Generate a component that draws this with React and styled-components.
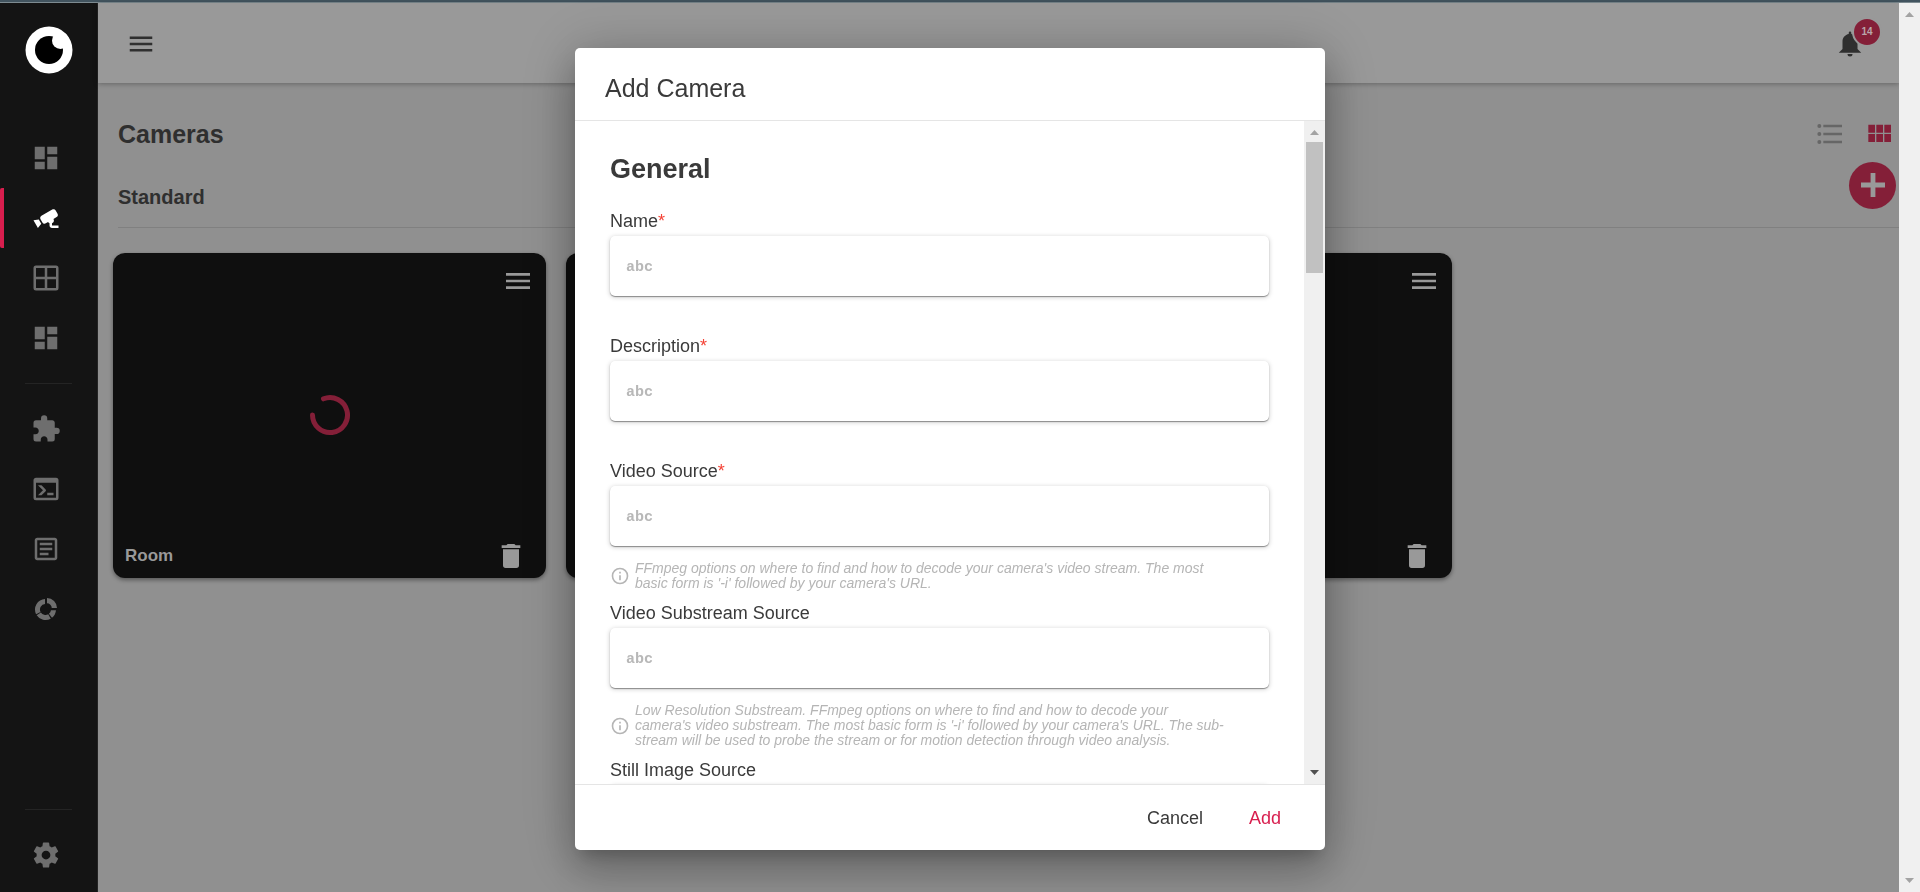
import React from 'react';
import styled, { createGlobalStyle } from 'styled-components';

const Global = createGlobalStyle`
  *, *::before, *::after { box-sizing: border-box; }
  html, body, #root { margin: 0; height: 100%; }
  body { font-family: "Liberation Sans", Arial, sans-serif; color: #2f2f2f; background: #909090; overflow: hidden; }
  h1, h2, h3, p { margin: 0; }
  button { font-family: inherit; border: 0; padding: 0; background: none; color: inherit; cursor: pointer; }
`;

const paths = {
  dashboard: 'M13,3V9H21V3M13,21H21V11H13M3,21H11V15H3M3,13H11V3H3V13Z',
  cctv: 'M18.15,4.94C17.77,4.91 17.37,5 17,5.2L8.35,10.2C7.39,10.76 7.07,12 7.62,12.94L9.12,15.53C9.67,16.5 10.89,16.82 11.85,16.27L13.65,15.23C13.92,15.69 14.32,16.06 14.81,16.27V18.04C14.81,19.13 15.7,20 16.81,20H22V18.04H16.81V16.27C17.72,15.87 18.31,14.97 18.31,14C18.31,13.54 18.19,13.11 17.97,12.73L20.5,11.27C21.47,10.71 21.8,9.5 21.24,8.53L19.74,5.94C19.4,5.34 18.79,5 18.15,4.94M6.22,13.17L2,13.87L2.75,15.17L4.75,18.63L5.5,19.93L8.22,16.63L6.22,13.17Z',
  grid: 'M4,2H20A2,2 0 0,1 22,4V20A2,2 0 0,1 20,22H4A2,2 0 0,1 2,20V4A2,2 0 0,1 4,2M4,4V11H11V4H4M4,20H11V13H4V20M20,20V13H13V20H20M20,4H13V11H20V4Z',
  puzzle: 'M20.5,11H19V7C19,5.89 18.1,5 17,5H13V3.5A2.5,2.5 0 0,0 10.5,1A2.5,2.5 0 0,0 8,3.5V5H4A2,2 0 0,0 2,7V10.8H3.5C5,10.8 6.2,12 6.2,13.5C6.2,15 5,16.2 3.5,16.2H2V20A2,2 0 0,0 4,22H7.8V20.5C7.8,19 9,17.8 10.5,17.8C12,17.8 13.2,19 13.2,20.5V22H17A2,2 0 0,0 19,20V16H20.5A2.5,2.5 0 0,0 23,13.5A2.5,2.5 0 0,0 20.5,11Z',
  console: 'M20,19V7H4V19H20M20,3A2,2 0 0,1 22,5V19A2,2 0 0,1 20,21H4A2,2 0 0,1 2,19V5C2,3.89 2.9,3 4,3H20M13,17V15H18V17H13M9.58,13L5.57,9H8.4L11.7,12.3C12.09,12.69 12.09,13.33 11.7,13.72L8.42,17H5.59L9.58,13Z',
  log: 'M5,3C3.89,3 3,3.89 3,5V19C3,20.11 3.89,21 5,21H19C20.11,21 21,20.11 21,19V5C21,3.89 20.11,3 19,3H5M5,5H19V19H5V5M7,7V9H17V7H7M7,11V13H17V11H7M7,15V17H14V15H7Z',
  donut: 'M12.8,3.2A8,8 0 0,1 20.8,11.2H16.6A3.8,3.8 0 0,0 12.8,7.4ZM11.2,4A8.4,8.4 0 0,0 4.04,16.1L7.64,14.34A4.4,4.4 0 0,1 11.2,8.02ZM4.54,16.94A8.4,8.4 0 0,0 15.8,19.7L13.8,16.23A4.4,4.4 0 0,1 7.9,14.78ZM16.8,18.95A8.4,8.4 0 0,0 19.98,13H15.96A4.4,4.4 0 0,1 14.33,15.83Z',
  cog: 'M12,15.5A3.5,3.5 0 0,1 8.5,12A3.5,3.5 0 0,1 12,8.5A3.5,3.5 0 0,1 15.5,12A3.5,3.5 0 0,1 12,15.5M19.43,12.97C19.47,12.65 19.5,12.33 19.5,12C19.5,11.67 19.47,11.34 19.43,11L21.54,9.37C21.73,9.22 21.78,8.95 21.66,8.73L19.66,5.27C19.54,5.05 19.27,4.96 19.05,5.05L16.56,6.05C16.04,5.66 15.5,5.32 14.87,5.07L14.5,2.42C14.46,2.18 14.25,2 14,2H10C9.75,2 9.54,2.18 9.5,2.42L9.13,5.07C8.5,5.32 7.96,5.66 7.44,6.05L4.95,5.05C4.73,4.96 4.46,5.05 4.34,5.27L2.34,8.73C2.21,8.95 2.27,9.22 2.46,9.37L4.57,11C4.53,11.34 4.5,11.67 4.5,12C4.5,12.33 4.53,12.65 4.57,12.97L2.46,14.63C2.27,14.78 2.21,15.05 2.34,15.27L4.34,18.73C4.46,18.95 4.73,19.03 4.95,18.95L7.44,17.94C7.96,18.34 8.5,18.68 9.13,18.93L9.5,21.58C9.54,21.82 9.75,22 10,22H14C14.25,22 14.46,21.82 14.5,21.58L14.87,18.93C15.5,18.67 16.04,18.34 16.56,17.94L19.05,18.95C19.27,19.03 19.54,18.95 19.66,18.73L21.66,15.27C21.78,15.05 21.73,14.78 21.54,14.63L19.43,12.97Z',
  menu: 'M3,6H21V8H3V6M3,11H21V13H3V11M3,16H21V18H3V16Z',
  bell: 'M14,20A2,2 0 0,1 12,22A2,2 0 0,1 10,20H14M12,2A1,1 0 0,1 13,3V4.08C15.84,4.56 18,7.03 18,10V16L21,19H3L6,16V10C6,7.03 8.16,4.56 11,4.08V3A1,1 0 0,1 12,2Z',
  list: 'M7,5H21V7H7V5M7,13V11H21V13H7M4,4.5A1.5,1.5 0 0,1 5.5,6A1.5,1.5 0 0,1 4,7.5A1.5,1.5 0 0,1 2.5,6A1.5,1.5 0 0,1 4,4.5M4,10.5A1.5,1.5 0 0,1 5.5,12A1.5,1.5 0 0,1 4,13.5A1.5,1.5 0 0,1 2.5,12A1.5,1.5 0 0,1 4,10.5M7,19V17H21V19H7M4,16.5A1.5,1.5 0 0,1 5.5,18A1.5,1.5 0 0,1 4,19.5A1.5,1.5 0 0,1 2.5,18A1.5,1.5 0 0,1 4,16.5Z',
  module: 'M16,5V11H21V5M10,11H15V5H10M16,18H21V12H16M10,18H15V12H10M4,18H9V12H4M4,11H9V5H4V11Z',
  plus: 'M20,13.6H13.6V20H10.4V13.6H4V10.4H10.4V4H13.6V10.4H20V13.6Z',
  trash: 'M19,4H15.5L14.5,3H9.5L8.5,4H5V6H19M6,19A2,2 0 0,0 8,21H16A2,2 0 0,0 18,19V7H6V19Z',
  info: 'M11,9H13V7H11M12,20C7.59,20 4,16.41 4,12C4,7.59 7.59,4 12,4C16.41,4 20,7.59 20,12C20,16.41 16.41,20 12,20M12,2A10,10 0 0,0 2,12A10,10 0 0,0 12,22A10,10 0 0,0 22,12A10,10 0 0,0 12,2M11,17H13V11H11V17Z',
};

const Svg = styled.svg`
  display: block;
  flex: none;
  fill: currentColor;
`;
const Icon = ({ name, size = 30 }) => (
  <Svg width={size} height={size} viewBox="0 0 24 24" aria-hidden="true"><path d={paths[name]} /></Svg>
);

const Screen = styled.div`
  display: flex;
  flex-direction: column;
  height: 100vh;
`;
const TopStrip = styled.div`
  flex: none;
  height: 3px;
  background: #42545f;
  border-bottom: 1px solid #7d8b91;
`;
const Body = styled.div`
  flex: 1;
  display: flex;
  min-height: 0;
`;
const Sidebar = styled.nav`
  flex: none;
  display: flex;
  flex-direction: column;
  width: 98px;
  background: #141414;
  border-right: 1px solid #242424;
  padding: 22px 0 7px;
`;
const Logo = styled.svg`
  display: block;
  flex: none;
  width: 50px;
  height: 50px;
  margin: 0 0 53px 24px;
`;
const NavItem = styled.a`
  flex: none;
  display: flex;
  align-items: center;
  height: 60px;
  padding-left: ${(p) => (p.$active ? 27 : 31)}px;
  color: ${(p) => (p.$active ? '#fff' : '#6e6e6e')};
  border-left: ${(p) => (p.$active ? '4px solid #d81e4e' : '0')};
  border-radius: 2px;
`;
const Rule = styled.hr`
  flex: none;
  width: 47px;
  height: 1px;
  border: 0;
  margin: ${(p) => (p.$bottom ? 'auto 0 15px 25px' : '15px 0 15px 25px')};
  background: #242424;
`;
const Main = styled.div`
  flex: 1;
  min-width: 0;
`;
const Header = styled.header`
  display: flex;
  align-items: center;
  justify-content: space-between;
  height: 80px;
  padding: 2px 34px 0 28px;
  background: #999;
  box-shadow: 0 1px 5px rgba(0, 0, 0, .3);
`;
const IconButton = styled.button`
  display: flex;
  position: relative;
  color: ${(p) => p.$color || 'inherit'};
`;
const Badge = styled.span`
  position: absolute;
  left: 17px;
  top: -12px;
  width: 30px;
  height: 30px;
  line-height: 26px;
  border: 2px solid #999;
  border-radius: 50%;
  background: #841f38;
  color: #b9a5aa;
  font-size: 10px;
  font-weight: bold;
  text-align: center;
`;
const Content = styled.main`
  padding: 31px 0 0 15px;
`;
const TitleRow = styled.div`
  display: flex;
  justify-content: space-between;
  align-items: center;
  height: 40px;
  padding: 0 4px 0 5px;
`;
const PageTitle = styled.h1`
  font-size: 25px;
  line-height: 32px;
`;
const Views = styled.div`
  display: flex;
  gap: 17px;
`;
const SectionRow = styled.div`
  display: flex;
  justify-content: space-between;
  align-items: center;
  height: 74px;
  margin: 0 0 25px 5px;
  padding: 0 3px 11px 0;
  border-bottom: 1px solid #808080;
`;
const SectionTitle = styled.h2`
  font-size: 20px;
  line-height: 24px;
  padding-top: 24px;
`;
const AddButton = styled.button`
  display: grid;
  place-items: center;
  width: 47px;
  height: 47px;
  border-radius: 50%;
  background: #841f38;
  color: #999;
`;
const Cards = styled.div`
  display: grid;
  grid-template-columns: repeat(4, 1fr);
  gap: 20px;
  margin-right: -6px;
`;
const Card = styled.article`
  display: flex;
  flex-direction: column;
  justify-content: space-between;
  height: 325px;
  padding: 12px;
  padding-bottom: 6px;
  border-radius: 12px;
  background: #0f0f0f;
  color: #999;
  box-shadow: 0 2px 4px rgba(0, 0, 0, .4);
`;
const CardTop = styled.div`
  display: flex;
  justify-content: flex-end;
`;
const CardBottom = styled.div`
  display: flex;
  align-items: center;
  justify-content: space-between;
  padding-right: 7px;
`;
const CardName = styled.h3`
  font-size: 17px;
  line-height: 24px;
`;
const Spinner = styled.svg`
  align-self: center;
  width: 42px;
  height: 42px;
  margin-bottom: 8px;
  fill: none;
  stroke: #841f38;
  stroke-width: 5;
  stroke-linecap: round;
`;

const ScrollTrack = styled.div`
  flex: none;
  display: flex;
  flex-direction: column;
  align-items: center;
  justify-content: space-between;
  width: 21px;
  background: #f0f0f0;
`;
const Arrow = styled.span`
  flex: none;
  width: 9px;
  height: 5px;
  margin: ${(p) => (p.$down ? '0 0 9px' : '9px 0 7px')};
  background: ${(p) => (p.$dark ? '#505050' : '#a3a3a3')};
  clip-path: ${(p) => (p.$down ? 'polygon(0 0, 100% 0, 50% 100%)' : 'polygon(50% 0, 100% 100%, 0 100%)')};
`;
const Thumb = styled.span`
  width: 17px;
  height: 131px;
  margin-bottom: auto;
  background: #c1c1c1;
`;

const Overlay = styled.div`
  position: fixed;
  inset: 0 21px 0 0;
  display: grid;
  place-items: center;
  padding: 48px 0 42px;
`;
const Dialog = styled.section`
  display: flex;
  flex-direction: column;
  width: 750px;
  max-width: 100%;
  height: 100%;
  margin-left: 1px;
  border-radius: 5px;
  overflow: hidden;
  background: #fff;
  color: #3a3a3a;
  box-shadow: 0 11px 15px -7px rgba(0, 0, 0, .2), 0 24px 38px 3px rgba(0, 0, 0, .14), 0 9px 46px 8px rgba(0, 0, 0, .12), 0 0 60px rgba(0, 0, 0, .12);
`;
const DialogHeader = styled.header`
  flex: none;
  display: flex;
  align-items: center;
  height: 73px;
  padding: 8px 30px 0;
  border-bottom: 1px solid #e5e5e5;
`;
const DialogTitle = styled.h2`
  font-size: 25px;
  font-weight: normal;
`;
const DialogBody = styled.div`
  flex: 1;
  display: flex;
  min-height: 0;
`;
const Form = styled.form`
  flex: 1;
  min-width: 0;
  overflow: hidden;
  padding: 30px 35px 0;
`;
const GroupTitle = styled.h3`
  font-size: 27px;
  line-height: 36px;
  margin-bottom: 22px;
`;
const Label = styled.label`
  display: block;
  font-size: 18px;
  line-height: 24px;
  margin-bottom: 3px;
`;
const Star = styled.span`
  color: #f44336;
`;
const InputBox = styled.div`
  display: flex;
  align-items: center;
  height: 60px;
  padding: 2px 16px 0;
  gap: 8px;
  border-radius: 5px;
  background: #fff;
  box-shadow: 0 1px 1px rgba(0, 0, 0, .38), 0 1px 5px rgba(0, 0, 0, .22);
`;
const TypeMark = styled.span`
  font: bold 15px "Liberation Mono", monospace;
  color: #b8b8b8;
`;
const Input = styled.input`
  flex: 1;
  min-width: 0;
  height: 40px;
  border: 0;
  outline: 0;
  background: none;
  font: 18px "Liberation Sans", sans-serif;
`;
const Hint = styled.div`
  display: flex;
  align-items: center;
  gap: 5px;
  width: 616px;
  max-width: 100%;
  padding: 15px 0 10px;
  color: #b5b5b5;
`;
const HintText = styled.p`
  font-size: 14px;
  line-height: 15px;
  font-style: italic;
`;
const Spacer = styled.div`
  height: 38px;
`;
const DialogFooter = styled.footer`
  flex: none;
  display: flex;
  align-items: center;
  justify-content: flex-end;
  gap: 46px;
  height: 66px;
  padding: 0 44px;
  border-top: 1px solid #e5e5e5;
`;
const TextButton = styled.button`
  font-size: 18px;
  line-height: 24px;
  color: ${(p) => (p.$primary ? '#d81e4e' : '#3a3a3a')};
`;

const nav = ['dashboard', 'cctv', 'grid', 'dashboard'];
const tools = ['puzzle', 'console', 'log', 'donut'];
const cameras = [{ id: 1, name: 'Room' }, { id: 2 }, { id: 3 }];
const fields = [
  { id: 'name', label: 'Name', required: true },
  { id: 'description', label: 'Description', required: true },
  { id: 'source', label: 'Video Source', required: true, hint: ["FFmpeg options on where to find and how to decode your camera's video stream. The most", "basic form is '-i' followed by your camera's URL."] },
  { id: 'substream', label: 'Video Substream Source', hint: ['Low Resolution Substream. FFmpeg options on where to find and how to decode your', "camera's video substream. The most basic form is '-i' followed by your camera's URL. The sub-", 'stream will be used to probe the stream or for motion detection through video analysis.'] },
  { id: 'still', label: 'Still Image Source' },
];

function Scrollbar({ thumb, dark }) {
  return (
    <ScrollTrack aria-hidden="true">
      <Arrow />
      {thumb && <Thumb />}
      <Arrow $down $dark={dark} />
    </ScrollTrack>
  );
}

function Field({ id, label, required, hint }) {
  return (
    <div>
      <Label htmlFor={id}>{label}{required && <Star>*</Star>}</Label>
      <InputBox>
        <TypeMark aria-hidden="true">abc</TypeMark>
        <Input id={id} type="text" />
      </InputBox>
      {hint ? (
        <Hint>
          <Icon name="info" size={20} />
          <HintText>{hint.map((line, i) => <React.Fragment key={line}>{i > 0 && <br />}{line}</React.Fragment>)}</HintText>
        </Hint>
      ) : <Spacer />}
    </div>
  );
}

export default function App() {
  return (
    <Screen>
      <Global />
      <TopStrip />
      <Body>
        <Sidebar aria-label="Main">
          <Logo viewBox="0 0 50 50" aria-hidden="true">
            <circle cx="25" cy="25" r="23.5" fill="#fff" />
            <circle cx="25" cy="25" r="14" fill="#000" />
            <circle cx="36.5" cy="15.5" r="8.5" fill="#fff" />
          </Logo>
          {nav.map((n, i) => <NavItem key={i} href="#" $active={n === 'cctv'} aria-label={n}><Icon name={n} /></NavItem>)}
          <Rule />
          {tools.map((n) => <NavItem key={n} href="#" aria-label={n}><Icon name={n} /></NavItem>)}
          <Rule $bottom />
          <NavItem href="#" aria-label="Settings"><Icon name="cog" /></NavItem>
        </Sidebar>
        <Main>
          <Header>
            <IconButton aria-label="Menu"><Icon name="menu" /></IconButton>
            <IconButton aria-label="Notifications"><Icon name="bell" /><Badge>14</Badge></IconButton>
          </Header>
          <Content>
            <TitleRow>
              <PageTitle>Cameras</PageTitle>
              <Views>
                <IconButton $color="#666" aria-label="List view"><Icon name="list" size={32} /></IconButton>
                <IconButton $color="#841f38" aria-label="Grid view"><Icon name="module" size={32} /></IconButton>
              </Views>
            </TitleRow>
            <SectionRow>
              <SectionTitle>Standard</SectionTitle>
              <AddButton aria-label="Add camera"><Icon name="plus" size={36} /></AddButton>
            </SectionRow>
            <Cards>
              {cameras.map((c) => (
                <Card key={c.id}>
                  <CardTop><IconButton aria-label="Camera menu"><Icon name="menu" size={32} /></IconButton></CardTop>
                  <Spinner viewBox="0 0 42 42" aria-hidden="true"><path d="M14.5 4.8A17.5 17.5 0 1 1 3.5 21" /></Spinner>
                  <CardBottom>
                    <CardName>{c.name}</CardName>
                    <IconButton aria-label="Delete camera"><Icon name="trash" size={32} /></IconButton>
                  </CardBottom>
                </Card>
              ))}
            </Cards>
          </Content>
        </Main>
        <Scrollbar />
      </Body>
      <Overlay>
        <Dialog role="dialog" aria-modal="true" aria-labelledby="dialog-title">
          <DialogHeader><DialogTitle id="dialog-title">Add Camera</DialogTitle></DialogHeader>
          <DialogBody>
            <Form>
              <GroupTitle>General</GroupTitle>
              {fields.map((f) => <Field key={f.id} {...f} />)}
            </Form>
            <Scrollbar thumb dark />
          </DialogBody>
          <DialogFooter>
            <TextButton>Cancel</TextButton>
            <TextButton $primary>Add</TextButton>
          </DialogFooter>
        </Dialog>
      </Overlay>
    </Screen>
  );
}
